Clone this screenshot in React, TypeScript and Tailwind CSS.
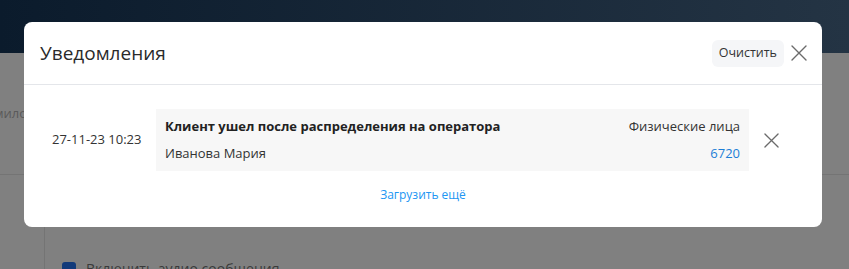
import React from 'react';

const CloseIcon = ({ className }: { className?: string }) => (
  <svg
    className={className}
    viewBox="0 0 16 16"
    fill="none"
    stroke="currentColor"
    strokeWidth={1.4}
    strokeLinecap="round"
  >
    <path d="M1 1L15 15M15 1L1 15" />
  </svg>
);

const App = () => {
  return (
    <div
      className="relative h-[269px] w-[849px] overflow-hidden bg-[#808080] text-[#333]"
      style={{ fontFamily: '"Open Sans", "Noto Sans", sans-serif' }}
    >
      {/* page behind the overlay */}
      <div className="h-[53px] w-full bg-gradient-to-r from-[#0b1b2c] to-[#243444]" />
      <div className="flex h-[122px] items-center border-b border-[#747474]">
        <span className="-ml-[6px] text-[13px] text-[#5a5a5a]">милоз</span>
      </div>
      <div className="flex h-[94px]">
        <div className="w-[45px] border-r border-[#747474]" />
        <div className="flex-1 pt-[83px] pl-[17px]">
          <div className="flex items-center gap-[10px]">
            <div className="h-[14px] w-[14px] rounded-[3px] bg-[#123a7a]" />
            <span className="text-[14px] text-[#3a3a3a]">Включить аудио сообщения</span>
          </div>
        </div>
      </div>

      {/* modal */}
      <div className="absolute left-[24px] top-[22px] w-[798px] rounded-[8px] bg-white">
        <div className="flex h-[63px] items-center justify-between border-b border-[#e4e6ea] pl-[16px] pr-[15px]">
          <h2 className="text-[19px] font-medium text-[#2a2a2a]">Уведомления</h2>
          <div className="flex items-center gap-[7px]">
            <button className="h-[27px] rounded-[6px] bg-[#f5f6f8] px-[7px] text-[12.5px] text-[#333]">
              Очистить
            </button>
            <CloseIcon className="h-[16px] w-[16px] text-[#6b6b6b]" />
          </div>
        </div>
        <div className="flex flex-col items-center pt-[24px] pb-[23px]">
          <div className="flex w-full items-center">
            <span className="w-[132px] pl-[28px] text-[13px] text-[#333]">27-11-23 10:23</span>
            <div className="flex h-[62px] w-[593px] flex-col justify-center gap-[8px] bg-[#f7f7f7] px-[9px]">
              <div className="flex justify-between text-[13px]">
                <span className="font-bold text-[#222]">Клиент ушел после распределения на оператора</span>
                <span className="text-[#333]">Физические лица</span>
              </div>
              <div className="flex justify-between text-[13px]">
                <span className="text-[#333]">Иванова Мария</span>
                <span className="text-[#1c7ed6]">6720</span>
              </div>
            </div>
            <CloseIcon className="ml-[15px] h-[15px] w-[15px] text-[#6b6b6b]" />
          </div>
          <a className="mt-[15px] text-[12px] text-[#2196f3]">Загрузить ещё</a>
        </div>
      </div>
    </div>
  );
};

export default App;
